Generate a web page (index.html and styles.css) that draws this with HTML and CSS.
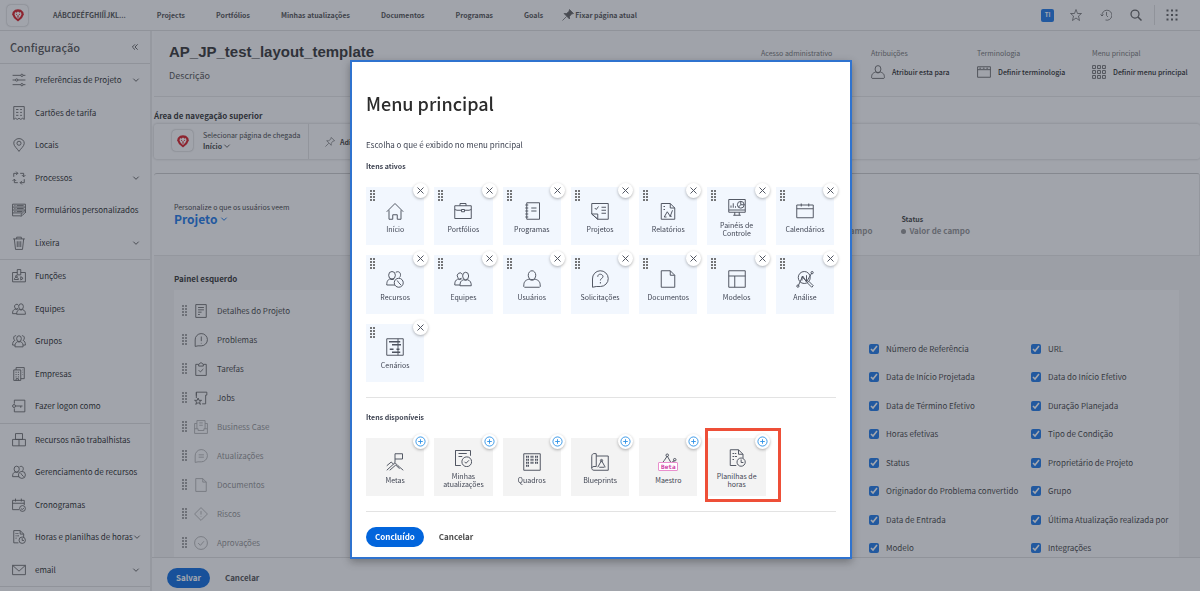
FILE: index.html
```html
<!DOCTYPE html>
<html lang="pt-BR">
<head>
<meta charset="utf-8">
<title>Menu principal</title>
<link rel="stylesheet" href="styles.css">
</head>
<body>
<svg class="sprite" aria-hidden="true">
<symbol id="lion" viewBox="0 0 24 24"><path d="M7 3l5-1 5 1 4 4 1 4-3 6-7 6-7-6-3-6 1-4z" fill="#d8141c" stroke="none"/><path d="M7 7l2 1 3-2 3 2 2-1 1 4-2 4-4 4-4-4-2-4z" fill="#fff" stroke="none"/><path d="M8.500 10.500l2 1M15.500 10.500l-2 1M12 12v3M10.500 15.500h3" stroke="#d8141c"/></symbol>
<symbol id="down" viewBox="0 0 12 12"><path d="M2 4l4 4 4-4"/></symbol>
<symbol id="collapse" viewBox="0 0 12 12"><path d="M6 2L2 6l4 4M10 2L6 6l4 4"/></symbol>
<symbol id="drag" viewBox="0 0 5 12"><path d="M0 1h2M3 1h2M0 4h2M3 4h2M0 7h2M3 7h2M0 10h2M3 10h2" stroke-width="1.500"/></symbol>
<symbol id="close" viewBox="0 0 12 12"><path d="M2 2l8 8M10 2l-8 8"/></symbol>
<symbol id="plus" viewBox="0 0 12 12"><circle cx="6" cy="6" r="5"/><path d="M6 3.500v5M3.500 6h5"/></symbol>
<symbol id="sliders" viewBox="0 0 24 24"><path d="M1 4h14M19 4h4M1 12h5M10 12h13M1 20h14M19 20h4"/><circle cx="17" cy="4" r="2"/><circle cx="8" cy="12" r="2"/><circle cx="17" cy="20" r="2"/></symbol>
<symbol id="receipt" viewBox="0 0 24 24"><path d="M3 1h18v22l-3-2-3 2-3-2-3 2-3-2-3 2zM7 6h4M14 6h3M7 11h4M14 11h3M7 16h4M14 16h3"/></symbol>
<symbol id="place" viewBox="0 0 24 24"><path d="M12 23C9 18 3 14 3 9a9 8 0 0118 0c0 5-6 9-9 14z"/><circle cx="12" cy="9" r="3.500"/></symbol>
<symbol id="process" viewBox="0 0 24 24"><path d="M3 10V4h7M7 1l3 3-3 3M14 4h6v6M17 7l3 3 3-3M21 14v6h-7M17 17l-3 3 3 3M10 20H4v-6M1 17l3-3 3 3"/></symbol>
<symbol id="form" viewBox="0 0 24 24"><path d="M1 2h22v15M1 2v20h13M1 7h22M1 12h22M1 17h16M4 4.500h2M8 4.500h12M4 9.500h2M8 9.500h12M4 14.500h2M8 14.500h10M15 23l1-4 6-6 2 2-6 6z"/></symbol>
<symbol id="trash" viewBox="0 0 24 24"><path d="M2 5h20M8 5V2h8v3M4 5l2 18h12l2-18M9 9v10M12 9v10M15 9v10"/></symbol>
<symbol id="badge" viewBox="0 0 24 24"><path d="M9 6H1v16h22V6h-8M9 1h6v9H9zM4 18c0-5 7-5 7 0zM15 13l4 3-4 3z"/><circle cx="7.500" cy="12.500" r="1.500"/></symbol>
<symbol id="team" viewBox="0 0 24 24"><ellipse cx="15.500" cy="8" rx="4" ry="5"/><path d="M8 21c0-6 2-7 5-8 2 1 3 1 5 0 4 1 5 4 5 8zM8 20H1c0-5 1-6 4-8 2 1 3 1 5 0M11 6a3.500 4 0 10-1 5"/></symbol>
<symbol id="group" viewBox="0 0 24 24"><ellipse cx="12" cy="8" rx="4" ry="5"/><path d="M5 22c0-6 2-8 5-9 1 1 3 1 4 0 4 1 5 4 5 9zM7 3c-4-1-6 5-2 8-3 1-4 4-4 8h4M17 3c4-1 6 5 2 8 3 1 4 4 4 8h-4"/></symbol>
<symbol id="building" viewBox="0 0 24 24"><path d="M3 5h12v18H3zM7 5V1h14v19h-6M6 9h2M10 9h2M6 13h2M10 13h2M6 17h2M10 17h2M7 23v-3h4v3M18 5h1M18 9h1M18 13h1"/></symbol>
<symbol id="login" viewBox="0 0 24 24"><path d="M4 8V2h18v20H4v-6M6 12h12M15 12v3"/><circle cx="3.500" cy="12" r="2.500"/></symbol>
<symbol id="boxes" viewBox="0 0 24 24"><path d="M6 1h12v10H6zM1 11h22v11H1zM12 11v11"/></symbol>
<symbol id="resource" viewBox="0 0 24 24"><ellipse cx="8" cy="7" rx="4.500" ry="5"/><path d="M12 20H1c0-6 2-7 4-8 2 1 4 1 6 0M13 3c6-3 8 4 5 7"/><circle cx="17" cy="17" r="6"/><path d="M15 14l2 3 3 3"/></symbol>
<symbol id="schedule" viewBox="0 0 24 24"><path d="M12 20H1V4h20v8M1 9h20M6 1v5M16 1v5"/><circle cx="18" cy="18" r="5"/><path d="M15.500 18l2 2 3-3"/></symbol>
<symbol id="timesheet" viewBox="0 0 24 24"><path d="M11 22H3V1h11l6 6v5M14 1v6h6M6 6h2M9 6h2M6 10h2M9 10h3M6 14h2"/><circle cx="17.500" cy="17.500" r="5.500"/><path d="M17.500 14v4h3"/></symbol>
<symbol id="mail" viewBox="0 0 24 24"><path d="M1 4h22v16H1zM1 4l11 10L23 4"/></symbol>
<symbol id="doclines" viewBox="0 0 24 24"><path d="M3 1h18v22H3zM7 6h10M7 10h10M7 14h6M7 18h3"/></symbol>
<symbol id="issue" viewBox="0 0 24 24"><path d="M2 23V12A10.500 10.500 0 1112.500 22H7zM12.500 6v8M12.500 17v1"/></symbol>
<symbol id="task" viewBox="0 0 24 24"><path d="M3 4h5l4-3 4 3h5v19H3zM8 4v3h8V4M8 14l3 3 5-5"/></symbol>
<symbol id="job" viewBox="0 0 24 24"><path d="M4 12V2h18v5h-2v15h-6M4 2v6M7 12l1.500 4H13l-3.500 2.500L11 23l-4-3-4 3 1.500-4.500L1 16h4.500z"/></symbol>
<symbol id="case" viewBox="0 0 24 24"><path d="M5 6H1v17h22V6h-4M1 15h6v3h10v-3h6M5 15V1h14v14M9 5h6M9 9h6"/></symbol>
<symbol id="update" viewBox="0 0 24 24"><path d="M2 23V12A10.500 10.500 0 1112.500 22H7zM8 10h9M8 14h9"/></symbol>
<symbol id="document" viewBox="0 0 24 24"><path d="M3 1h12l6 6v16H3zM15 1v6h6"/></symbol>
<symbol id="risk" viewBox="0 0 24 24"><path d="M12 1l11 11-11 11L1 12zM12 7v6M12 16v1"/></symbol>
<symbol id="approve" viewBox="0 0 24 24"><circle cx="12" cy="12" r="11"/><path d="M7 12l4 4 6-7"/></symbol>
<symbol id="pin" viewBox="0 0 24 24"><path d="M15 1l8 8-4 1-4 5v5L4 9h5l5-4zM9 15l-8 8"/></symbol>
<symbol id="star" viewBox="0 0 24 24"><path d="M12 1l3 8h8l-6 5 2 9-7-5-7 5 2-9-6-5h8z"/></symbol>
<symbol id="history" viewBox="0 0 24 24"><path d="M1 11l3 3 3-3M4 14A10 10 0 1111 22M13 6v7l3 3"/></symbol>
<symbol id="search" viewBox="0 0 24 24"><circle cx="10" cy="10" r="8" stroke-width="2.500"/><path d="M16 16l7 7" stroke-width="3"/></symbol>
<symbol id="apps" viewBox="0 0 24 24"><path d="M1 3h4M10 3h4M19 3h4M1 12h4M10 12h4M19 12h4M1 21h4M10 21h4M19 21h4" stroke-width="4"/></symbol>
<symbol id="grid" viewBox="0 0 24 24"><path d="M1 1h5v5H1zM9.500 1h5v5h-5zM18 1h5v5h-5zM1 9.500h5v5H1zM9.500 9.500h5v5h-5zM18 9.500h5v5h-5zM1 18h5v5H1zM9.500 18h5v5h-5zM18 18h5v5h-5z"/></symbol>
<symbol id="window" viewBox="0 0 24 24"><path d="M1 3h22v18H1zM1 8h22M4 5.500h3M10 5.500h3M16 5.500h3"/></symbol>
<symbol id="user" viewBox="0 0 24 24"><ellipse cx="12" cy="7" rx="5" ry="6"/><path d="M1 22c0-7 2-8 7-10 2 2 6 2 8 0 5 2 7 3 7 10l-1 1H2z"/></symbol>
<symbol id="home" viewBox="0 0 24 24"><path d="M1 13L12 2l11 11M4 11v12h5v-6h6v6h5V11"/></symbol>
<symbol id="briefcase" viewBox="0 0 24 24"><path d="M1 5h22v17H1zM8 5V2h8v3M1 10l3 1h6M14 11h6l3-1M10 10h4v3h-4z"/></symbol>
<symbol id="notebook" viewBox="0 0 24 24"><path d="M5 1h17v22H5zM3 4h4M3 8h4M3 12h4M3 16h4M3 20h4M11 8h7M11 12h7"/></symbol>
<symbol id="project" viewBox="0 0 24 24"><path d="M1 16V2h22v21H9zM1 16h8v7M1 16l8 7M5 8l2 2 3-4M14 7h6M14 11h6M14 15h6"/></symbol>
<symbol id="report" viewBox="0 0 24 24"><path d="M3 2h12l6 6v15H3zM15 2v6h6M6 6h2M6 10h2M7 20l4-7 4 6 3-8M7 20h3M14 19h3"/></symbol>
<symbol id="dashboard" viewBox="0 0 24 24"><path d="M1 2h22v17H1zM1 16h22M9 19v4M15 19v4M7 23h10M4 13v-3M7 13V7M10 13v-2"/><circle cx="17" cy="9" r="4.500"/><path d="M17 4v5h5M17 9l-3 3"/></symbol>
<symbol id="calendar" viewBox="0 0 24 24"><path d="M1 4h22v17H1zM1 9h22M7 2v4M17 2v4"/></symbol>
<symbol id="question" viewBox="0 0 24 24"><path d="M2 23V12A10.500 10.500 0 1112.500 22H7zM9 9c0-5 7-4 7 0 0 2-3.500 2-3.500 5M12.500 16v2"/></symbol>
<symbol id="template" viewBox="0 0 24 24"><path d="M1 1h22v22H1zM1 8h22M9 8v15"/></symbol>
<symbol id="analysis" viewBox="0 0 24 24"><circle cx="11" cy="10" r="8"/><path d="M17 15l6 6-2 2-6-6M3 21l6-13 5 8 7-12M8 14V9l6 6V7"/><circle cx="2.500" cy="21.500" r="1.500"/><circle cx="21.500" cy="3.500" r="1.500"/></symbol>
<symbol id="scenario" viewBox="0 0 24 24"><path d="M1 1h22v22H1zM16 1v22"/><path d="M4 5h15M8 9h12M5 15h5M14 15h4M8 19h11" stroke-width="2.200"/></symbol>
<symbol id="goal" viewBox="0 0 24 24"><path d="M12 13V1h10v7H12M1 23l11-10 4 4 7 6M1 17l6-5 3 3M5 23l8-7 5 5"/></symbol>
<symbol id="myupdate" viewBox="0 0 24 24"><path d="M9 22H2V2h20v7M2 2v20M6 6h11M6 10h5"/><circle cx="17" cy="17" r="6.500"/><path d="M14 17l2 2 4-4"/></symbol>
<symbol id="board" viewBox="0 0 24 24"><path d="M1 1h22v22H1z"/><path d="M4 5h4M10 5h4M16 5h4M4 9h4M10 9h4M16 9h4M4 13h4M10 13h4M16 13h4M4 17h4" stroke-width="2.500" stroke-dasharray="1.700 .6"/></symbol>
<symbol id="blueprint" viewBox="0 0 24 24"><path d="M7 4h16v19H4c-4 0-4-5 0-5h3V1c-5-1-6 1-6 4v15M9 19l5-9 5 9M11 19h7"/><circle cx="14" cy="10" r="1.500"/></symbol>
<symbol id="maestro" viewBox="0 0 24 24"><path d="M3 15l4-5 4-6 5 9 5-3"/><circle cx="11" cy="3" r="1.700"/><circle cx="21" cy="9" r="1.700"/></symbol>
</svg>

<div class="app">
<header class="topbar">
  <span class="logo"><svg class="icon i14"><use href="#lion"/></svg></span>
  <nav class="topnav">
    <a href="#">AÁBCDEÉFGHIÍÎJKL...</a><a href="#">Projects</a><a href="#">Portfólios</a><a href="#">Minhas atualizações</a><a href="#">Documentos</a><a href="#">Programas</a><a href="#">Goals</a>
  </nav>
  <button class="pinpage"><svg class="icon i12 filled"><use href="#pin"/></svg>Fixar página atual</button>
  <div class="tools">
    <button class="avatar">TI</button>
    <button aria-label="Favoritos"><svg class="icon i12"><use href="#star"/></svg></button>
    <button aria-label="Recentes"><svg class="icon i12"><use href="#history"/></svg></button>
    <button aria-label="Pesquisar"><svg class="icon i12"><use href="#search"/></svg></button>
    <button class="apps" aria-label="Aplicativos"><svg class="icon i12"><use href="#apps"/></svg></button>
  </div>
</header>

<aside class="sidebar">
  <div class="side-head"><h2>Configuração</h2><button aria-label="Recolher"><svg class="icon i8"><use href="#collapse"/></svg></button></div>
  <ul class="side-list">
    <li><a href="#"><svg class="icon i14"><use href="#sliders"/></svg>Preferências de Projeto<svg class="icon i8 end"><use href="#down"/></svg></a></li>
    <li><a href="#"><svg class="icon i14"><use href="#receipt"/></svg>Cartões de tarifa</a></li>
    <li><a href="#"><svg class="icon i14"><use href="#place"/></svg>Locais</a></li>
    <li><a href="#"><svg class="icon i14"><use href="#process"/></svg>Processos<svg class="icon i8 end"><use href="#down"/></svg></a></li>
    <li><a href="#"><svg class="icon i14"><use href="#form"/></svg>Formulários personalizados</a></li>
    <li class="last"><a href="#"><svg class="icon i14"><use href="#trash"/></svg>Lixeira<svg class="icon i8 end"><use href="#down"/></svg></a></li>
    <li><a href="#"><svg class="icon i14"><use href="#badge"/></svg>Funções</a></li>
    <li><a href="#"><svg class="icon i14"><use href="#team"/></svg>Equipes</a></li>
    <li><a href="#"><svg class="icon i14"><use href="#group"/></svg>Grupos</a></li>
    <li><a href="#"><svg class="icon i14"><use href="#building"/></svg>Empresas</a></li>
    <li class="last"><a href="#"><svg class="icon i14"><use href="#login"/></svg>Fazer logon como</a></li>
    <li><a href="#"><svg class="icon i14"><use href="#boxes"/></svg>Recursos não trabalhistas</a></li>
    <li><a href="#"><svg class="icon i14"><use href="#resource"/></svg>Gerenciamento de recursos</a></li>
    <li><a href="#"><svg class="icon i14"><use href="#schedule"/></svg>Cronogramas</a></li>
    <li><a href="#"><svg class="icon i14"><use href="#timesheet"/></svg>Horas e planilhas de horas<svg class="icon i8 end"><use href="#down"/></svg></a></li>
    <li class="last"><a href="#"><svg class="icon i14"><use href="#mail"/></svg>email<svg class="icon i8 end"><use href="#down"/></svg></a></li>
  </ul>
</aside>

<main class="main">
  <section class="page-head">
    <div class="titles"><h1>AP_JP_test_layout_template</h1><p>Descrição</p></div>
    <div class="meta">
      <div><span>Acesso administrativo</span></div>
      <div><span>Atribuições</span><button><svg class="icon i14"><use href="#user"/></svg>Atribuir esta para</button></div>
      <div><span>Terminologia</span><button><svg class="icon i14"><use href="#window"/></svg>Definir terminologia</button></div>
      <div><span>Menu principal</span><button><svg class="icon i14"><use href="#grid"/></svg>Definir menu principal</button></div>
    </div>
  </section>
  <h3 class="nav-title">Área de navegação superior</h3>
  <section class="landing">
    <div class="landing-page">
      <span class="logo"><svg class="icon i14"><use href="#lion"/></svg></span>
      <div><span>Selecionar página de chegada</span><button class="strong">Início<svg class="icon i8"><use href="#down"/></svg></button></div>
    </div>
    <button class="add-pin"><svg class="icon i10"><use href="#pin"/></svg>Adic.</button>
  </section>
  <section class="custom">
    <div class="custom-head">
      <div class="object"><span>Personalize o que os usuários veem</span><button>Projeto<svg class="icon i8"><use href="#down"/></svg></button></div>
      <dl class="field"><dd>Valor de campo</dd></dl>
      <dl class="field status"><dt>Status</dt><dd><i class="dot"></i>Valor de campo</dd></dl>
    </div>
    <div class="custom-body">
      <h3>Painel esquerdo</h3>
      <div class="panel">
        <ul class="rows">
          <li><svg class="drag"><use href="#drag"/></svg><svg class="icon i14"><use href="#doclines"/></svg>Detalhes do Projeto</li>
          <li><svg class="drag"><use href="#drag"/></svg><svg class="icon i14"><use href="#issue"/></svg>Problemas</li>
          <li><svg class="drag"><use href="#drag"/></svg><svg class="icon i14"><use href="#task"/></svg>Tarefas</li>
          <li><svg class="drag"><use href="#drag"/></svg><svg class="icon i14"><use href="#job"/></svg>Jobs</li>
          <li class="off"><svg class="drag"><use href="#drag"/></svg><svg class="icon i14"><use href="#case"/></svg>Business Case</li>
          <li class="off"><svg class="drag"><use href="#drag"/></svg><svg class="icon i14"><use href="#update"/></svg>Atualizações</li>
          <li class="off"><svg class="drag"><use href="#drag"/></svg><svg class="icon i14"><use href="#document"/></svg>Documentos</li>
          <li class="off"><svg class="drag"><use href="#drag"/></svg><svg class="icon i14"><use href="#risk"/></svg>Riscos</li>
          <li class="off"><svg class="drag"><use href="#drag"/></svg><svg class="icon i14"><use href="#approve"/></svg>Aprovações</li>
        </ul>
        <div class="checks">
          <label><input type="checkbox" checked>Número de Referência</label><label><input type="checkbox" checked>URL</label>
          <label><input type="checkbox" checked>Data de Início Projetada</label><label><input type="checkbox" checked>Data do Início Efetivo</label>
          <label><input type="checkbox" checked>Data de Término Efetivo</label><label><input type="checkbox" checked>Duração Planejada</label>
          <label><input type="checkbox" checked>Horas efetivas</label><label><input type="checkbox" checked>Tipo de Condição</label>
          <label><input type="checkbox" checked>Status</label><label><input type="checkbox" checked>Proprietário de Projeto</label>
          <label><input type="checkbox" checked>Originador do Problema convertido</label><label><input type="checkbox" checked>Grupo</label>
          <label><input type="checkbox" checked>Data de Entrada</label><label><input type="checkbox" checked>Última Atualização realizada por</label>
          <label><input type="checkbox" checked>Modelo</label><label><input type="checkbox" checked>Integrações</label>
        </div>
      </div>
    </div>
  </section>
  <footer class="actions"><button class="primary">Salvar</button><button class="plain">Cancelar</button></footer>
</main>
</div>

<div class="backdrop">
<div class="dialog" role="dialog" aria-labelledby="dlg">
  <h2 id="dlg">Menu principal</h2>
  <p>Escolha o que é exibido no menu principal</p>
  <h3>Itens ativos</h3>
  <ul class="cards active">
    <li><svg class="drag"><use href="#drag"/></svg><button class="act" aria-label="Remover"><svg class="icon i9"><use href="#close"/></svg></button><svg class="icon i18"><use href="#home"/></svg><span>Início</span></li>
    <li><svg class="drag"><use href="#drag"/></svg><button class="act" aria-label="Remover"><svg class="icon i9"><use href="#close"/></svg></button><svg class="icon i18"><use href="#briefcase"/></svg><span>Portfólios</span></li>
    <li><svg class="drag"><use href="#drag"/></svg><button class="act" aria-label="Remover"><svg class="icon i9"><use href="#close"/></svg></button><svg class="icon i18"><use href="#notebook"/></svg><span>Programas</span></li>
    <li><svg class="drag"><use href="#drag"/></svg><button class="act" aria-label="Remover"><svg class="icon i9"><use href="#close"/></svg></button><svg class="icon i18"><use href="#project"/></svg><span>Projetos</span></li>
    <li><svg class="drag"><use href="#drag"/></svg><button class="act" aria-label="Remover"><svg class="icon i9"><use href="#close"/></svg></button><svg class="icon i18"><use href="#report"/></svg><span>Relatórios</span></li>
    <li><svg class="drag"><use href="#drag"/></svg><button class="act" aria-label="Remover"><svg class="icon i9"><use href="#close"/></svg></button><svg class="icon i18"><use href="#dashboard"/></svg><span>Painéis de Controle</span></li>
    <li><svg class="drag"><use href="#drag"/></svg><button class="act" aria-label="Remover"><svg class="icon i9"><use href="#close"/></svg></button><svg class="icon i18"><use href="#calendar"/></svg><span>Calendários</span></li>
    <li><svg class="drag"><use href="#drag"/></svg><button class="act" aria-label="Remover"><svg class="icon i9"><use href="#close"/></svg></button><svg class="icon i18"><use href="#resource"/></svg><span>Recursos</span></li>
    <li><svg class="drag"><use href="#drag"/></svg><button class="act" aria-label="Remover"><svg class="icon i9"><use href="#close"/></svg></button><svg class="icon i18"><use href="#team"/></svg><span>Equipes</span></li>
    <li><svg class="drag"><use href="#drag"/></svg><button class="act" aria-label="Remover"><svg class="icon i9"><use href="#close"/></svg></button><svg class="icon i18"><use href="#user"/></svg><span>Usuários</span></li>
    <li><svg class="drag"><use href="#drag"/></svg><button class="act" aria-label="Remover"><svg class="icon i9"><use href="#close"/></svg></button><svg class="icon i18"><use href="#question"/></svg><span>Solicitações</span></li>
    <li><svg class="drag"><use href="#drag"/></svg><button class="act" aria-label="Remover"><svg class="icon i9"><use href="#close"/></svg></button><svg class="icon i18"><use href="#document"/></svg><span>Documentos</span></li>
    <li><svg class="drag"><use href="#drag"/></svg><button class="act" aria-label="Remover"><svg class="icon i9"><use href="#close"/></svg></button><svg class="icon i18"><use href="#template"/></svg><span>Modelos</span></li>
    <li><svg class="drag"><use href="#drag"/></svg><button class="act" aria-label="Remover"><svg class="icon i9"><use href="#close"/></svg></button><svg class="icon i18"><use href="#analysis"/></svg><span>Análise</span></li>
    <li><svg class="drag"><use href="#drag"/></svg><button class="act" aria-label="Remover"><svg class="icon i9"><use href="#close"/></svg></button><svg class="icon i18"><use href="#scenario"/></svg><span>Cenários</span></li>
  </ul>
  <hr>
  <h3>Itens disponíveis</h3>
  <ul class="cards available">
    <li><button class="act" aria-label="Adicionar"><svg class="icon i11"><use href="#plus"/></svg></button><svg class="icon i18"><use href="#goal"/></svg><span>Metas</span></li>
    <li><button class="act" aria-label="Adicionar"><svg class="icon i11"><use href="#plus"/></svg></button><svg class="icon i18"><use href="#myupdate"/></svg><span>Minhas atualizações</span></li>
    <li><button class="act" aria-label="Adicionar"><svg class="icon i11"><use href="#plus"/></svg></button><svg class="icon i18"><use href="#board"/></svg><span>Quadros</span></li>
    <li><button class="act" aria-label="Adicionar"><svg class="icon i11"><use href="#plus"/></svg></button><svg class="icon i18"><use href="#blueprint"/></svg><span>Blueprints</span></li>
    <li><button class="act" aria-label="Adicionar"><svg class="icon i11"><use href="#plus"/></svg></button><div class="beta-icon"><svg class="icon i18"><use href="#maestro"/></svg><b>Beta</b></div><span>Maestro</span></li>
    <li class="marked"><button class="act" aria-label="Adicionar"><svg class="icon i11"><use href="#plus"/></svg></button><svg class="icon i18"><use href="#timesheet"/></svg><span>Planilhas de horas</span></li>
  </ul>
  <hr>
  <div class="dialog-actions"><button class="primary">Concluído</button><button class="plain">Cancelar</button></div>
</div>
</div>
</body>
</html>
```

FILE: styles.css
```css
* { box-sizing: border-box; }
body {
  margin: 0;
  font: 8px/12px "Noto Sans CJK JP", "Noto Sans", sans-serif;
  color: #3a3a3a;
  background: #fcfcfc;
}
h1, h2, h3, p, ul, dl, dd { margin: 0; padding: 0; }
ul { list-style: none; }
a { color: inherit; text-decoration: none; }
button { font: inherit; color: inherit; background: none; border: 0; padding: 0; display: flex; align-items: center; white-space: nowrap; }
.sprite { position: absolute; width: 0; height: 0; }

.icon { fill: none; stroke: currentColor; stroke-width: 1.5; flex: none; color: #5a5a5a; }
.i8 { width: 8px; height: 8px; }
.i9 { width: 9px; height: 9px; stroke-width: 1.3; }
.i10 { width: 10px; height: 10px; }
.i11 { width: 11px; height: 11px; stroke-width: 1; }
.i12 { width: 12px; height: 12px; }
.i14 { width: 14px; height: 14px; }
.i18 { width: 18px; height: 18px; stroke-width: 1.3; }
.filled { fill: currentColor; }
.drag { width: 5px; height: 12px; stroke: #4b4b4b; flex: none; }

.app {
  display: grid;
  grid-template-columns: 152px 1fr;
  grid-template-rows: 31px 1fr;
  height: 100vh;
}

.topbar {
  grid-column: 1 / -1;
  display: flex;
  align-items: center;
  padding: 0 22px 0 7px;
  border-bottom: 1px solid #dcdcdc;
  background: #fcfcfc;
  font-size: 7px;
  font-weight: 700;
  color: #4b4b4b;
}
.logo { width: 21px; height: 21px; display: grid; place-items: center; border-radius: 4px; box-shadow: 0 0 2px #999; flex: none; }
.topnav { display: flex; gap: 31px; margin-left: 25px; white-space: nowrap; }
.pinpage { margin-left: 19px; gap: 1px; font-weight: 700; }
.tools { display: flex; align-items: center; gap: 18px; margin-left: auto; }
.avatar { width: 13px; height: 13px; background: #1473e6; color: #fff; font-weight: 700; font-size: 6px; justify-content: center; border-radius: 2px; }
.avatar + button { margin-left: -2px; }
.apps { border-left: 1px solid #dcdcdc; padding: 4px 0 4px 11px; margin-left: -6px; }

.sidebar { display: flex; flex-direction: column; border-right: 2px solid #e8e8e8; min-height: 0; padding-bottom: 4px; }
.side-head { display: flex; align-items: center; justify-content: space-between; height: 33px; padding: 0 11px 0 10px; border-bottom: 1px solid #dcdcdc; flex: none; }
.side-head h2 { font-size: 11px; font-weight: 500; color: #4b4b4b; }
.side-list { flex: 1; display: flex; flex-direction: column; min-height: 0; }
.side-list li { flex: 1; display: flex; }
.side-list a { flex: 1; display: flex; align-items: center; padding: 0 10px 0 12px; white-space: nowrap; color: #222; }
.side-list .i14 { margin-right: 9px; }
.side-list .end { margin-left: auto; }
.side-list .last { border-bottom: 1px solid #dcdcdc; }

.main { display: flex; flex-direction: column; min-width: 0; min-height: 0; padding-left: 2px; }
.page-head { display: flex; justify-content: space-between; height: 66px; flex: none; padding: 14px 14px 0 15px; background: #f9f9f9; border-bottom: 1px solid #e4e4e4; }
.page-head h1 { font: 700 15px/14px "Liberation Sans", Arial, sans-serif; color: #2c2c2c; }
.titles p { margin-top: 11px; font-size: 9px; color: #4b4b4b; }
.meta { display: grid; grid-template-columns: 110px 106px 115px 94px; font-size: 7px; white-space: nowrap; padding-top: 2px; }
.meta span { display: block; color: #6e6e6e; }
.meta button { gap: 7px; margin-top: 6px; font-weight: 500; color: #222; }
.nav-title { font-size: 8px; margin-top: 13px; color: #2c2c2c; }
.landing { display: flex; height: 35px; margin: 2px 0 14px; border-radius: 3px; box-shadow: 0 0 3px #bbb; flex: none; font-size: 7px; }
.landing-page { display: flex; align-items: center; gap: 10px; width: 155px; padding: 0 0 2px 18px; border-right: 1px solid #e0e0e0; line-height: 11px; white-space: nowrap; }
.strong { font-weight: 700; gap: 1px; }
.add-pin { margin-left: 16px; gap: 5px; font-weight: 700; }
.custom { flex: 1; display: flex; flex-direction: column; min-height: 0; border-top: 1px solid #c8c8c8; border-radius: 3px; }
.custom-head { display: flex; height: 82px; padding: 27px 229px 0 20px; flex: none; border-bottom: 1px solid #e4e4e4; border-right: 1px solid #e4e4e4; }
.object { font-size: 7px; }
.object button { font-size: 12px; font-weight: 700; color: #1473e6; gap: 3px; }
.object .icon { color: #1473e6; }
.field { display: flex; flex-direction: column; justify-content: flex-end; height: 36px; margin-left: auto; font-size: 7px; }
.field dt { font-weight: 700; }
.field dd { font-size: 8px; font-weight: 700; color: #8e8e8e; display: flex; align-items: center; gap: 3px; white-space: nowrap; }
.status { margin-left: 29px; }
.dot { width: 5px; height: 5px; border-radius: 50%; background: #8e8e8e; }
.custom-body { flex: 1; display: flex; flex-direction: column; min-height: 0; background: #f3f3f3; padding: 17px 21px 0 20px; }
.custom-body h3 { font-size: 8px; line-height: 12px; margin-bottom: 5px; color: #2c2c2c; }
.panel { flex: 1; display: flex; justify-content: space-between; background: #fcfcfc; min-height: 0; }
.rows { display: flex; flex-direction: column; padding: 7px 0 0 8px; }
.rows li { flex: 1; display: flex; align-items: center; color: #3a3a3a; }
.rows .drag { margin-right: 7px; opacity: .7; }
.rows .icon { margin-right: 9px; }
.rows .off { color: #8e8e8e; }
.rows .off .icon { opacity: .5; }
.checks { width: 310px; display: grid; grid-template-columns: 162px 1fr; grid-auto-rows: 17px; align-content: space-between; padding-top: 50px; }
.checks label { display: flex; align-items: center; gap: 7px; white-space: nowrap; }
.checks input { width: 10px; height: 10px; margin: 0; accent-color: #1473e6; }
.actions { display: flex; align-items: center; gap: 15px; height: 34px; padding: 6px 0 0 15px; margin-left: -2px; border-top: 1px solid #dcdcdc; background: #fcfcfc; flex: none; }
.primary { height: 20px; padding: 0 9px; border-radius: 10px; background: #0265dc; color: #fff; font-weight: 700; }
.plain { font-weight: 700; color: #4b4b4b; }

.backdrop {
  position: fixed;
  inset: 0;
  display: flex;
  justify-content: center;
  align-items: flex-start;
  padding: 60px 0 0 2px;
  background: rgba(50, 57, 73, .45);
}
.dialog { width: 502px; padding: 29px 14px 10px; color: #3f4452; background: #fff; border: 2px solid #2f73cf; box-shadow: 0 3px 8px rgba(0, 0, 0, .3); }
.dialog h2 { font-size: 18px; line-height: 24px; font-weight: 500; color: #2c2c2c; }
.dialog p { margin-top: 24px; }
.dialog h3 { font-size: 7px; margin-top: 9px; }
.cards { display: grid; grid-template-columns: repeat(7, 1fr); gap: 10px; margin: 15px 2px 0 0; }
.cards li {
  position: relative;
  aspect-ratio: 1;
  display: flex;
  flex-direction: column;
  align-items: center;
  justify-content: center;
  gap: 5px;
  padding-top: 2px;
  font-size: 7px;
  line-height: 8px;
  text-align: center;
  background: #f2f7fe;
}
.cards .icon { color: #4f5461; }
.cards .drag { position: absolute; left: 4px; top: 3px; }
.act { position: absolute; top: -4px; right: -4px; width: 15px; height: 15px; border-radius: 50%; justify-content: center; background: #fff; box-shadow: 0 1px 3px rgba(0, 0, 0, .3); }
.available li { background: #f3f3f3; }
.available .act .icon { color: #2f93e6; }
.dialog hr { margin: 15px 0 0; border: 0; border-top: 1px solid #e3e3e3; }
.dialog hr + h3 { margin-top: 13px; }
.beta-icon { position: relative; width: 20px; height: 18px; display: grid; place-items: center; }
.beta-icon b { position: absolute; left: 0; bottom: 0; width: 20px; height: 9px; font: 700 6px/7px "DejaVu Sans Mono", monospace; color: #d042a8; background: #fff; border: 1px solid #e98fce; border-radius: 1px; }
.marked::after { content: ""; position: absolute; inset: -10px -15px -6px -2px; border: 3px solid #ee4f38; }
.dialog-actions { display: flex; gap: 15px; margin-top: 15px; }
```
